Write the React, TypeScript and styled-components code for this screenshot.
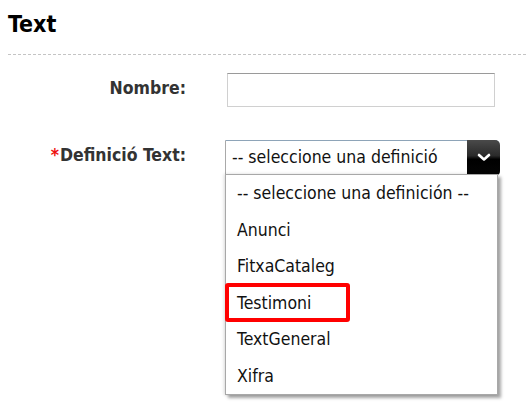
import React from "react";
import styled, { createGlobalStyle } from "styled-components";

const GlobalStyle = createGlobalStyle`
  html, body {
    margin: 0;
    padding: 0;
    background: #ffffff;
  }
  body {
    font-family: "DejaVu Sans Condensed", "DejaVu Sans", Tahoma, sans-serif;
    font-stretch: condensed;
  }
`;

const Page = styled.div`
  min-height: 411px;
  padding-left: 8px;
`;

const Header = styled.div`
  padding: 11px 0 17px;
  border-bottom: 1px dashed #c4c4c4;
`;

const Title = styled.h2`
  margin: 0;
  font-size: 23px;
  line-height: 26px;
  font-weight: bold;
  color: #000;
`;

const Form = styled.div`
  display: grid;
  grid-template-columns: 178px 275px;
  column-gap: 39px;
  row-gap: 32px;
  align-items: center;
  padding-top: 18px;
`;

const Label = styled.label`
  justify-self: end;
  font-size: 17.5px;
  font-weight: bold;
  color: #333;
  margin-top: -4px;
`;

const Required = styled.span`
  color: #ee1111;
  margin-right: 1px;
`;

const TextInput = styled.div`
  margin-left: 2px;
  width: 268px;
  height: 34px;
  box-sizing: border-box;
  border: 1px solid #d0d0d0;
  border-top-color: #9a9a9a;
  background: #fff;
`;

const SelectWrap = styled.div`
  position: relative;
  margin-top: 1px;
`;

const Select = styled.div`
  display: flex;
  height: 35px;
  box-sizing: border-box;
  border: 1px solid #a9a9a9;
  border-top-color: #8ea4b8;
  border-right: none;
  border-radius: 0 5px 4px 0;
  background: #fff;
`;

const Value = styled.div`
  flex: 1;
  overflow: hidden;
  white-space: nowrap;
  padding-left: 6px;
  margin-right: 29px;
  font-size: 17.5px;
  line-height: 33px;
  color: #111;
`;

const ArrowButton = styled.div`
  width: 33px;
  margin: -1px 0;
  display: flex;
  align-items: center;
  justify-content: center;
  border-radius: 0 5px 4px 0;
  background: linear-gradient(#4a4a4a 0%, #2a2a2a 45%, #000 55%, #050505 100%);
`;

const List = styled.ul`
  position: absolute;
  top: 100%;
  left: 0;
  width: 273px;
  margin: -1px 0 0;
  padding: 0;
  list-style: none;
  box-sizing: border-box;
  border: 1px solid #a8a8a8;
  background: #fff;
  box-shadow: 3px 3px 3px rgba(0, 0, 0, 0.35), -1px 0 3px rgba(0, 0, 0, 0.15);
  z-index: 2;
`;

const Item = styled.li<{ $marked?: boolean }>`
  position: relative;
  height: 36.5px;
  line-height: 36.5px;
  padding-left: 11px;
  font-size: 17.5px;
  color: #111;
  white-space: nowrap;

  ${(p) =>
    p.$marked &&
    `
    &::after {
      content: "";
      position: absolute;
      top: -2px;
      bottom: -1px;
      left: -1px;
      width: 125px;
      box-sizing: border-box;
      border: 4px solid #ff0000;
      border-radius: 3px;
    }
  `}
`;

const options = [
  "-- seleccione una definición --",
  "Anunci",
  "FitxaCataleg",
  "Testimoni",
  "TextGeneral",
  "Xifra",
];

export default function App() {
  return (
    <Page>
      <GlobalStyle />
      <Header>
        <Title>Text</Title>
      </Header>

      <Form>
        <Label>Nombre:</Label>
        <TextInput />

        <Label>
          <Required>*</Required>Definició Text:
        </Label>
        <SelectWrap>
          <Select>
            <Value>-- seleccione una definición --</Value>
            <ArrowButton>
              <svg width="14" height="9" viewBox="0 0 14 9">
                <path
                  d="M2 2 L7 6.5 L12 2"
                  fill="none"
                  stroke="#fff"
                  strokeWidth="2.6"
                  strokeLinecap="round"
                  strokeLinejoin="round"
                />
              </svg>
            </ArrowButton>
          </Select>
          <List>
            {options.map((o) => (
              <Item key={o} $marked={o === "Testimoni"}>
                {o}
              </Item>
            ))}
          </List>
        </SelectWrap>
      </Form>
    </Page>
  );
}
